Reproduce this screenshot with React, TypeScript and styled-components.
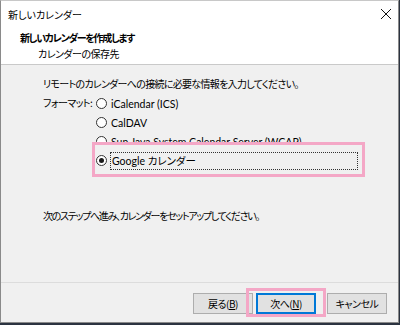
import * as React from 'react'
import styled, { createGlobalStyle } from 'styled-components'

const GlobalStyle = createGlobalStyle`
  html, body {
    margin: 0;
    padding: 0;
    background: #2b3340;
  }
  body {
    font-family: "Noto Sans CJK JP", "Noto Sans", sans-serif;
    font-size: 10px;
    color: #000;
    font-feature-settings: "palt";
  }
`

const Window = styled.div`
  width: 399px;
  height: 323px;
  box-sizing: border-box;
  border: 1px solid #8a8a8a;
  border-top-color: #c8c8c8;
  background: #f0f0f0;
  display: flex;
  flex-direction: column;
`

const TitleBar = styled.div`
  height: 29px;
  background: #fff;
  display: flex;
  align-items: center;
  justify-content: space-between;
  padding: 0 6px 3px 7px;
  box-sizing: border-box;
  font-size: 10px;
`

const CloseButton = styled.span`
  display: flex;
  width: 12px;
  height: 12px;
`

const Header = styled.div`
  height: 35px;
  background: #fff;
  border-bottom: 1px solid #c9c9c9;
  box-sizing: border-box;
  padding-left: 19px;
  display: flex;
  flex-direction: column;
`

const HeaderTitle = styled.div`
  font-weight: bold;
  line-height: 16px;
  letter-spacing: -1.3px;
`

const HeaderSub = styled.div`
  line-height: 16px;
  padding-left: 18px;
  letter-spacing: -0.5px;
`

const Body = styled.div`
  flex: 1;
  padding: 11px 0 0 42px;
  display: flex;
  flex-direction: column;
`

const Text = styled.div<{ $gap?: number; $tight?: number }>`
  line-height: 16px;
  white-space: nowrap;
  margin-top: ${p => p.$gap ?? 0}px;
  letter-spacing: ${p => p.$tight ?? -0.7}px;
`

const FormatRow = styled.div`
  display: flex;
  margin-top: 2px;
`

const FormatLabel = styled.div`
  width: 53px;
  height: 19px;
  line-height: 17px;
  white-space: nowrap;
  letter-spacing: -0.6px;
`

const Options = styled.div`
  display: flex;
  flex-direction: column;
`

const Option = styled.label`
  height: 19px;
  display: flex;
  align-items: center;
  gap: 3px;
  white-space: nowrap;
`

const Radio = styled.span<{ $checked?: boolean }>`
  width: 11px;
  height: 11px;
  box-sizing: border-box;
  border: 1px solid #333;
  border-radius: 50%;
  background: #fff;
  display: flex;
  align-items: center;
  justify-content: center;
  flex: none;
  &::after {
    content: '';
    width: 5px;
    height: 5px;
    border-radius: 50%;
    background: ${p => (p.$checked ? '#1a1a1a' : 'transparent')};
  }
`

const OptionText = styled.span<{ $focused?: boolean }>`
  font-family: Lato, "Noto Sans CJK JP", sans-serif;
  font-size: 10.5px;
  line-height: 16px;
  padding: 0 1px;
  ${p =>
    p.$focused &&
    `
    width: 250px;
    box-sizing: border-box;
    border: 1px dotted #333;
    height: 18px;
  `}
`

const Highlight = styled.div`
  border: 3px solid #f4a7c6;
  background: #f0f0f0;
  margin: -9px 0 -7px -4px;
  padding: 6px 4px 4px 1px;
  width: 273px;
  box-sizing: border-box;
`

const Footer = styled.div`
  height: 40px;
  border-top: 1px solid #dcdcdc;
  box-sizing: border-box;
  display: flex;
  justify-content: flex-end;
  align-items: flex-start;
  padding: 10px 11px 0 0;
`

const Button = styled.button<{ $default?: boolean }>`
  width: 60px;
  height: 21px;
  box-sizing: border-box;
  font-family: inherit;
  font-size: 10px;
  font-feature-settings: "palt";
  letter-spacing: -0.5px;
  background: #e1e1e1;
  border: 1px solid ${p => (p.$default ? '#0078d7' : '#adadad')};
  box-shadow: ${p => (p.$default ? 'inset 0 0 0 1px #0078d7' : 'none')};
  padding: 0;
  color: #000;
  margin-left: 11px;
  &:first-child {
    margin-left: 0;
  }
`

const ButtonMark = styled.span`
  position: relative;
  display: flex;
  margin-left: 3px;
  &::after {
    content: '';
    position: absolute;
    left: -10px;
    right: -10px;
    top: -5px;
    bottom: -3px;
    border: 3px solid #f4a7c6;
  }
  & > button {
    margin-left: 0;
  }
`

const Key = styled.span`
  text-decoration: underline;
`

const formats = ['iCalendar (ICS)', 'CalDAV', 'Sun Java System Calendar Server (WCAP)']

export default function App() {
  return (
    <>
      <GlobalStyle />
      <Window>
        <TitleBar>
          <span>新しいカレンダー</span>
          <CloseButton>
            <svg width="12" height="12" viewBox="0 0 12 12">
              <path d="M1 1 L11 11 M11 1 L1 11" stroke="#111" strokeWidth="1" />
            </svg>
          </CloseButton>
        </TitleBar>
        <Header>
          <HeaderTitle>新しいカレンダーを作成します</HeaderTitle>
          <HeaderSub>カレンダーの保存先</HeaderSub>
        </Header>
        <Body>
          <Text>リモートのカレンダーへの接続に必要な情報を入力してください。</Text>
          <FormatRow>
            <FormatLabel>フォーマット:</FormatLabel>
            <Options>
              {formats.map(f => (
                <Option key={f}>
                  <Radio />
                  <OptionText>{f}</OptionText>
                </Option>
              ))}
              <Highlight>
                <Option>
                  <Radio $checked />
                  <OptionText $focused>Google カレンダー</OptionText>
                </Option>
              </Highlight>
            </Options>
          </FormatRow>
          <Text $gap={38} $tight={-1.3}>
            次のステップへ進み、カレンダーをセットアップしてください。
          </Text>
        </Body>
        <Footer>
          <Button>
            戻る(<Key>B</Key>)
          </Button>
          <ButtonMark>
            <Button $default>
              次へ(<Key>N</Key>)
            </Button>
          </ButtonMark>
          <Button>キャンセル</Button>
        </Footer>
      </Window>
    </>
  )
}
